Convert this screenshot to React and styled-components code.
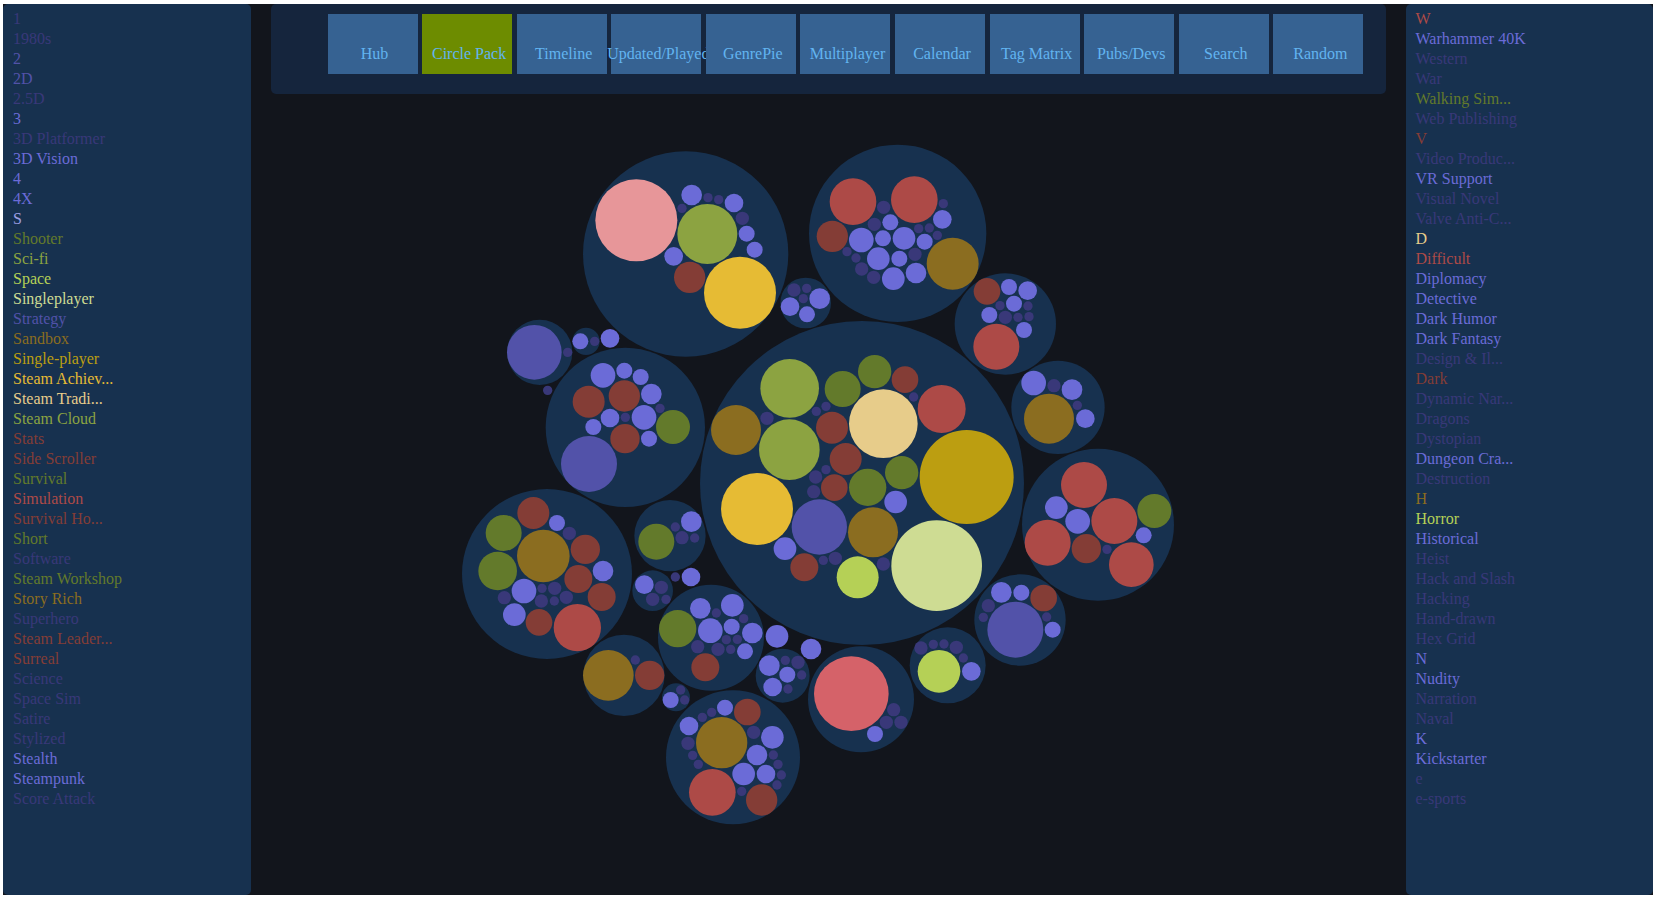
import React from "react";
import styled, { createGlobalStyle } from "styled-components";

const GlobalStyle = createGlobalStyle`
  body {
    margin: 0;
    background: #ffffff;
    font-family: "Liberation Serif", "Times New Roman", serif;
    font-size: 16px;
  }
`;

/* Shared palette: text in the tag lists and circles in the pack use the same keys. */
const palette = {
  pack: "#17314f",
  night: "#393879",
  indigo: "#5252a9",
  violet: "#6b6bd7",
  lavender: "#9c9ee2",
  moss: "#637a2b",
  leaf: "#8ca341",
  lime: "#b5d056",
  pale: "#cedc93",
  bronze: "#8b6d20",
  gold: "#bc9e11",
  amber: "#e6bb34",
  sand: "#e7cc8a",
  brick: "#843d36",
  red: "#ad4a47",
  rose: "#d56269",
  pink: "#e79699",
};

const Page = styled.div`
  box-sizing: border-box;
  min-height: 100vh;
  padding: 4px 17px 13px 3px;
  display: flex;
`;

const Board = styled.div`
  flex: 1;
  display: grid;
  grid-template-columns: 15% minmax(0, 1fr) 15%;
  background: #12151c;
`;

const TagPanel = styled.aside`
  padding: 5px 10px;
  border-radius: 5px;
  background: ${palette.pack};
`;

const TagList = styled.ul`
  margin: 0;
  padding: 0;
  list-style: none;
`;

const Tag = styled.li`
  line-height: 20px;
  white-space: nowrap;
  color: ${(p) => palette[p.$tone]};
`;

const Center = styled.main`
  display: flex;
  flex-direction: column;
`;

const NavBar = styled.nav`
  box-sizing: border-box;
  height: 90px;
  margin: 0 20px;
  padding: 10px 22px 20px 57px;
  display: flex;
  justify-content: space-between;
  border-radius: 5px;
  background: #15253d;
`;

const NavButton = styled.button`
  box-sizing: border-box;
  flex: 0 1 90px;
  min-width: 0;
  height: 60px;
  padding: 0 0 11px 4px;
  border: 0;
  display: flex;
  align-items: flex-end;
  justify-content: center;
  font: inherit;
  line-height: 18px;
  white-space: nowrap;
  color: #62b4f0;
  background: ${(p) => (p.$active ? "#6d8c00" : "#366292")};
  cursor: pointer;
`;

const PackChart = styled.svg`
  display: block;
  flex: 1 1 0;
  width: 100%;
  min-height: 0;
`;

const navItems = [
  "Hub", "Circle Pack", "Timeline", "Updated/Played", "GenrePie", "Multiplayer",
  "Calendar", "Tag Matrix", "Pubs/Devs", "Search", "Random",
];

const leftTags = [
  ["1", "night"], ["1980s", "night"], ["2", "indigo"], ["2D", "indigo"], ["2.5D", "night"],
  ["3", "violet"], ["3D Platformer", "night"], ["3D Vision", "violet"], ["4", "violet"],
  ["4X", "violet"], ["S", "lavender"], ["Shooter", "moss"], ["Sci-fi", "leaf"],
  ["Space", "lime"], ["Singleplayer", "pale"], ["Strategy", "indigo"], ["Sandbox", "bronze"],
  ["Single-player", "gold"], ["Steam Achiev...", "amber"], ["Steam Tradi...", "sand"],
  ["Steam Cloud", "leaf"], ["Stats", "brick"], ["Side Scroller", "brick"],
  ["Survival", "moss"], ["Simulation", "red"], ["Survival Ho...", "brick"],
  ["Short", "moss"], ["Software", "night"], ["Steam Workshop", "moss"],
  ["Story Rich", "bronze"], ["Superhero", "night"], ["Steam Leader...", "brick"],
  ["Surreal", "brick"], ["Science", "night"], ["Space Sim", "night"], ["Satire", "night"],
  ["Stylized", "night"], ["Stealth", "violet"], ["Steampunk", "violet"],
  ["Score Attack", "night"],
];

const rightTags = [
  ["W", "red"], ["Warhammer 40K", "violet"], ["Western", "night"], ["War", "night"],
  ["Walking Sim...", "moss"], ["Web Publishing", "night"], ["V", "brick"],
  ["Video Produc...", "night"], ["VR Support", "violet"], ["Visual Novel", "night"],
  ["Valve Anti-C...", "night"], ["D", "sand"], ["Difficult", "red"],
  ["Diplomacy", "violet"], ["Detective", "violet"], ["Dark Humor", "violet"],
  ["Dark Fantasy", "violet"], ["Design & Il...", "night"], ["Dark", "brick"],
  ["Dynamic Nar...", "night"], ["Dragons", "night"], ["Dystopian", "night"],
  ["Dungeon Cra...", "violet"], ["Destruction", "night"], ["H", "bronze"],
  ["Horror", "lime"], ["Historical", "violet"], ["Heist", "night"],
  ["Hack and Slash", "night"], ["Hacking", "night"], ["Hand-drawn", "night"],
  ["Hex Grid", "night"], ["N", "violet"], ["Nudity", "violet"], ["Narration", "night"],
  ["Naval", "night"], ["K", "violet"], ["Kickstarter", "violet"], ["e", "night"],
  ["e-sports", "night"],
];

/* Each region: an origin, then circles keyed by tone as [cx, cy, r]. Packs are drawn first. */
const regions = [
  {
    at: [1500, 390],
    circles: {
      pack: [[557, 372, 308], [119, 667, 98], [258, 634, 41]],
      pink: [[409, 271, 123]],
      leaf: [[622, 312, 90]],
      amber: [[720, 488, 108]],
      brick: [[569, 442, 47]],
      indigo: [[103, 667, 82]],
      violet: [
        [575, 195, 31], [702, 219, 28], [740, 311, 24], [764, 359, 24], [521, 379, 28],
        [241, 634, 24], [330, 625, 28],
      ],
      night: [
        [624, 203, 14], [656, 209, 14], [546, 235, 14], [727, 265, 20], [203, 667, 14],
        [284, 634, 14],
      ],
    },
  },
  {
    at: [2340, 390],
    circles: {
      pack: [[353, 310, 266], [77, 519, 76], [676, 582, 152]],
      red: [[219, 215, 70], [403, 209, 70], [649, 650, 69]],
      brick: [[157, 319, 47], [621, 484, 40]],
      bronze: [[518, 401, 78]],
      violet: [
        [331, 277, 24], [244, 330, 37], [309, 325, 24], [372, 325, 34], [434, 335, 24],
        [487, 268, 28], [295, 386, 34], [358, 386, 24], [408, 429, 31], [340, 446, 34],
        [119, 506, 31], [30, 530, 28], [81, 553, 24], [687, 471, 24], [743, 482, 28],
        [702, 521, 24], [628, 555, 24], [732, 600, 24],
      ],
      night: [
        [311, 232, 20], [283, 283, 20], [490, 221, 14], [416, 296, 14], [448, 294, 14],
        [472, 316, 14], [201, 365, 14], [228, 384, 14], [405, 373, 20], [245, 417, 20],
        [281, 442, 20], [42, 480, 20], [80, 475, 14], [70, 506, 14], [660, 527, 14],
        [744, 528, 14], [676, 562, 20], [714, 562, 14], [747, 560, 14],
      ],
    },
  },
  {
    at: [1350, 1020],
    circles: {
      pack: [[526, 262, 239], [291, 702, 255], [660, 587, 107], [608, 752, 61]],
      brick: [
        [416, 185, 48], [523, 168, 47], [525, 296, 44], [250, 519, 48], [406, 628, 44],
        [385, 717, 42], [455, 771, 42], [267, 847, 40],
      ],
      moss: [[669, 261, 51], [161, 579, 54], [143, 693, 58], [619, 605, 54]],
      indigo: [[417, 372, 84]],
      bronze: [[280, 648, 79]],
      red: [[382, 863, 71]],
      violet: [
        [459, 106, 37], [523, 92, 24], [572, 111, 24], [604, 162, 31], [480, 234, 28],
        [582, 232, 37], [430, 261, 24], [597, 296, 24], [321, 549, 24], [459, 693, 31],
        [222, 753, 37], [193, 824, 34], [724, 545, 31], [583, 734, 28], [723, 711, 28],
      ],
      night: [
        [293, 151, 14], [630, 205, 14], [526, 232, 14], [358, 580, 20], [163, 773, 20],
        [276, 745, 14], [314, 745, 20], [274, 783, 20], [313, 783, 14], [349, 772, 20],
        [676, 561, 14], [696, 593, 20], [734, 594, 14], [634, 742, 20], [608, 778, 20],
        [648, 778, 14], [676, 711, 14],
      ],
    },
  },
  {
    at: [2070, 930],
    circles: {
      pack: [[516, 519, 486], [773, 1066, 114]],
      leaf: [[299, 235, 88], [298, 419, 91]],
      moss: [[458, 237, 54], [554, 185, 50], [533, 532, 56], [635, 488, 50]],
      brick: [
        [645, 209, 40], [426, 353, 48], [467, 447, 48], [433, 533, 40], [343, 772, 42],
      ],
      red: [[755, 297, 72]],
      sand: [[580, 341, 103]],
      bronze: [[138, 360, 75], [549, 667, 75]],
      gold: [[830, 501, 141]],
      amber: [[201, 597, 108]],
      indigo: [[388, 651, 83]],
      pale: [[740, 767, 136]],
      lime: [[503, 802, 63], [747, 1084, 64]],
      violet: [[617, 576, 34], [285, 716, 34], [844, 1084, 28]],
      night: [
        [671, 261, 14], [379, 304, 14], [408, 289, 14], [231, 325, 20], [408, 479, 14],
        [377, 501, 20], [371, 545, 20], [400, 751, 14], [436, 745, 20], [580, 762, 20],
        [693, 1014, 20], [730, 1003, 14], [762, 1002, 14], [799, 1012, 20], [820, 1044, 14],
      ],
    },
  },
  {
    at: [2880, 1050],
    circles: {
      pack: [[294, 172, 140], [414, 524, 228], [180, 810, 137]],
      bronze: [[267, 206, 75]],
      red: [[372, 405, 69], [463, 513, 69], [263, 578, 69], [514, 644, 67]],
      moss: [[583, 483, 51]],
      brick: [[379, 596, 44], [251, 744, 40]],
      indigo: [[166, 839, 84]],
      violet: [
        [221, 99, 37], [336, 119, 31], [376, 206, 28], [289, 473, 34], [353, 514, 37],
        [551, 556, 24], [124, 727, 31], [184, 728, 24], [278, 839, 24],
      ],
      night: [
        [282, 107, 20], [352, 166, 14], [441, 598, 14], [85, 767, 20], [70, 802, 14],
        [260, 801, 14],
      ],
    },
  },
  {
    at: [1710, 1680],
    circles: {
      pack: [
        [423, 233, 159], [162, 346, 122], [318, 412, 42], [638, 347, 81], [489, 592, 201],
        [873, 418, 159],
      ],
      moss: [[323, 206, 56]],
      brick: [[406, 322, 42], [239, 346, 44], [532, 456, 40], [575, 720, 47]],
      bronze: [[115, 346, 76], [455, 548, 77]],
      red: [[427, 697, 70]],
      rose: [[844, 401, 112]],
      violet: [
        [391, 145, 31], [487, 136, 34], [421, 212, 37], [485, 200, 24], [547, 219, 31],
        [525, 274, 24], [621, 229, 34], [723, 267, 31], [302, 420, 24], [598, 317, 31],
        [652, 344, 24], [608, 381, 28], [465, 443, 24], [357, 498, 28], [607, 532, 34],
        [561, 585, 31], [521, 642, 34], [588, 642, 28], [915, 522, 24],
      ],
      night: [
        [439, 159, 14], [521, 176, 14], [383, 260, 20], [469, 239, 14], [502, 238, 14],
        [444, 268, 20], [482, 268, 14], [196, 300, 14], [332, 390, 14], [344, 420, 14],
        [646, 301, 14], [684, 307, 20], [695, 345, 14], [654, 387, 14], [425, 457, 14],
        [397, 472, 14], [354, 550, 20], [551, 517, 20], [368, 586, 14], [385, 613, 14],
        [610, 585, 14], [624, 613, 14], [634, 645, 14], [621, 675, 14], [515, 694, 14],
        [971, 449, 20], [949, 487, 20], [993, 487, 20],
      ],
    },
  },
];

function CirclePack() {
  return (
    <PackChart viewBox="753 282 3465 2403" role="img" aria-label="Games packed by tag">
      {regions.map(({ at, circles }) => (
        <g key={at.join()} transform={`translate(${at[0]} ${at[1]})`}>
          {Object.entries(circles).map(([tone, list]) => (
            <g key={tone} fill={palette[tone]}>
              {list.map(([cx, cy, r]) => (
                <circle key={`${cx}-${cy}`} cx={cx} cy={cy} r={r} />
              ))}
            </g>
          ))}
        </g>
      ))}
    </PackChart>
  );
}

function Tags({ items, label }) {
  return (
    <TagPanel aria-label={label}>
      <TagList>
        {items.map(([name, tone]) => (
          <Tag key={name} $tone={tone}>{name}</Tag>
        ))}
      </TagList>
    </TagPanel>
  );
}

export default function App() {
  return (
    <Page>
      <GlobalStyle />
      <Board>
        <Tags items={leftTags} label="Tags, first part" />
        <Center>
          <NavBar>
            {navItems.map((name) => (
              <NavButton key={name} type="button" $active={name === "Circle Pack"}>
                {name}
              </NavButton>
            ))}
          </NavBar>
          <CirclePack />
        </Center>
        <Tags items={rightTags} label="Tags, second part" />
      </Board>
    </Page>
  );
}
